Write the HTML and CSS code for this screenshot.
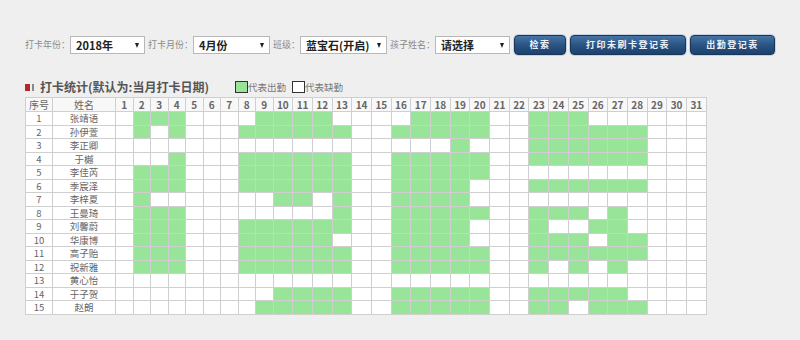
FILE: index.html
```html
<!DOCTYPE html>
<html lang="zh-CN">
  <head>
    <meta charset="UTF-8" />
    <meta name="viewport" content="width=device-width, initial-scale=1.0" />
    <title>打卡统计</title>
    <link rel="stylesheet" href="styles.css">
  </head>
  <body>
    <div class="search-bar">
      <label class="field-label">打卡年份：</label>
      <span class="select-box"><select><option>2018年</option></select></span>
      <label class="field-label">打卡月份：</label>
      <span class="select-box select-month"><select><option>4月份</option></select></span>
      <label class="field-label">班级：</label>
      <span class="select-box select-class"><select><option>蓝宝石(开启)</option></select></span>
      <label class="field-label">孩子姓名：</label>
      <span class="select-box"><select><option>请选择</option></select></span>
      <button class="btn btn-search">检索</button>
      <button class="btn btn-print">打印未刷卡登记表</button>
      <button class="btn btn-record">出勤登记表</button>
    </div>

    <div class="title-row">
      <h3 class="title"><i class="mark-red"></i><i class="mark-gray"></i>打卡统计(默认为:当月打卡日期)</h3>
      <span class="legend"><i class="legend-box on"></i>代表出勤</span>
      <span class="legend"><i class="legend-box"></i>代表缺勤</span>
    </div>

    <table class="attend-table">
      <colgroup id="cols">
        <col class="col-no">
        <col class="col-name">
      </colgroup>
      <thead>
        <tr id="head-row">
          <th class="th-text">序号</th>
          <th class="th-text">姓名</th>
        </tr>
      </thead>
      <tbody id="attend-body"></tbody>
    </table>

    <script src="script.js"></script>
  </body>
</html>
```

FILE: styles.css
```css
* {
  box-sizing: border-box;
}

body {
  margin: 0;
  padding: 35px 0 0 25px;
  background-color: #efefef;
  font-family: "Noto Sans CJK SC", "DejaVu Sans", sans-serif;
  color: #555;
}

/* search bar */
.search-bar {
  display: flex;
  align-items: center;
  height: 19px;
}

.field-label {
  font-size: 9px;
  color: #8a8a8a;
  margin-left: 3px;
}

.field-label:first-child {
  margin-left: 0;
}

.select-box {
  position: relative;
  display: inline-block;
  height: 18px;
}

.select-box select {
  appearance: none;
  -webkit-appearance: none;
  display: block;
  width: 75px;
  height: 18px;
  margin: 0;
  padding: 0 0 0 5px;
  border: 1px solid #b8b8b8;
  border-radius: 0;
  background: #fff;
  color: #222;
  font-family: "Noto Sans CJK SC", sans-serif;
  font-size: 11px;
  font-weight: bold;
  line-height: 16px;
}

.select-month select {
  width: 77px;
}

.select-class select {
  width: 87px;
}

/* dropdown arrow */
.select-box::after {
  content: "";
  position: absolute;
  right: 6px;
  top: 7px;
  border-top: 5px solid #222;
  border-left: 2.5px solid transparent;
  border-right: 2.5px solid transparent;
  pointer-events: none;
}

.btn {
  height: 20px;
  margin-left: 4px;
  padding: 0;
  border: 1px solid #173659;
  border-radius: 4px;
  background: linear-gradient(#4675a5, #2a5483 50%, #1c416c);
  box-shadow: 0 0 0 1px #c9d3df;
  color: #eef3f8;
  font-family: "Noto Sans CJK SC", sans-serif;
  font-size: 9px;
  font-weight: bold;
  letter-spacing: 1.5px;
  line-height: 18px;
  cursor: pointer;
}

.btn-search {
  width: 52px;
}

.btn-print {
  width: 116px;
}

.btn-record {
  width: 85px;
}

/* title */
.title-row {
  display: flex;
  align-items: center;
  height: 14px;
  margin-top: 26px;
}

.title {
  display: flex;
  align-items: center;
  margin: 0;
  font-size: 12px;
  line-height: 14px;
  color: #555;
  font-weight: bold;
}

.mark-red {
  display: inline-block;
  width: 5px;
  height: 7px;
  background: #b3272d;
  margin-right: 2px;
}

.mark-gray {
  display: inline-block;
  width: 2px;
  height: 7px;
  background: #888;
  margin-right: 6px;
}

.legend {
  display: flex;
  align-items: center;
  font-size: 9.5px;
  color: #777;
}

.legend:first-of-type {
  margin-left: 26px;
}

.legend + .legend {
  margin-left: 6px;
}

.legend-box {
  display: inline-block;
  width: 13px;
  height: 12px;
  border: 1px solid #333;
  background: #fff;
}

.legend-box.on {
  background: #98e498;
}

/* table */
.attend-table {
  margin-top: 3px;
  width: 681px;
  table-layout: fixed;
  border-collapse: collapse;
  background: #fff;
  font-size: 9.5px;
  line-height: 12px;
}

.col-no {
  width: 27px;
}

.col-name {
  width: 63px;
}

.col-day {
  width: 17.5px;
}

.col-day2 {
  width: 19.7px;
}

.attend-table th,
.attend-table td {
  padding: 0;
  border: 1px solid #cfcfcf;
  text-align: center;
  color: #666;
}

.attend-table th {
  height: 14px;
  background: #f8f8f8;
  font-weight: bold;
  font-size: 10px;
}

.attend-table th.th-text {
  font-weight: normal;
}

.attend-table tbody tr {
  height: 13.5px;
}

.attend-table td.on {
  background: #98e498;
}
```

FILE: script.js
```js
const names = ["张靖语", "孙伊萱", "李正卿", "于樾", "李佳芮", "季宸泽", "李梓夏",
  "王曼琦", "刘馨蔚", "华康博", "高子贻", "祝新雅", "黄心怡", "于子贺", "赵朗"];

// days with check-in, per child
const present = [
  [2, 3, 4, 9, 10, 11, 12, 17, 18, 19, 20, 23, 24, 25],
  [2, 4, 8, 9, 10, 11, 12, 13, 16, 17, 18, 19, 20, 23, 24, 25, 26, 27, 28],
  [19, 23, 24, 25, 26, 27, 28],
  [4, 8, 9, 10, 11, 12, 13, 16, 17, 18, 19, 20, 23, 24, 25, 26, 27, 28],
  [2, 3, 4, 8, 9, 10, 11, 12, 13, 16, 17, 18, 19, 20],
  [2, 3, 4, 8, 9, 10, 11, 12, 13, 16, 17, 18, 19, 23, 24, 25, 26, 27, 28],
  [2, 10, 11, 13, 16, 17, 18, 19],
  [2, 3, 4, 13, 16, 17, 18, 19, 20, 23, 24, 25, 27],
  [2, 3, 4, 8, 9, 10, 11, 12, 13, 16, 17, 18, 19, 23, 26, 27],
  [2, 3, 4, 8, 9, 10, 11, 12, 16, 17, 18, 19, 23, 24, 25, 27, 28],
  [2, 3, 4, 8, 9, 10, 11, 12, 13, 16, 17, 18, 19, 20, 23, 24, 25, 26, 27, 28],
  [2, 3, 4, 8, 9, 10, 11, 12, 13, 16, 17, 18, 19, 20, 23, 25, 27],
  [],
  [10, 11, 12, 13, 16, 17, 18, 19, 20, 23, 24, 25, 26, 27],
  [9, 10, 11, 12, 13, 16, 17, 18, 19, 20, 23, 24, 26, 27, 28]
];

const cols = document.getElementById("cols");
const headRow = document.getElementById("head-row");
const body = document.getElementById("attend-body");

for (let d = 1; d <= 31; d++) {
  const col = document.createElement("col");
  col.className = d < 10 ? "col-day" : "col-day2";
  cols.appendChild(col);
  const th = document.createElement("th");
  th.textContent = d;
  headRow.appendChild(th);
}

names.forEach(function (name, i) {
  const tr = document.createElement("tr");
  let html = "<td>" + (i + 1) + "</td><td>" + name + "</td>";
  for (let d = 1; d <= 31; d++) {
    html += present[i].indexOf(d) > -1 ? '<td class="on"></td>' : "<td></td>";
  }
  tr.innerHTML = html;
  body.appendChild(tr);
});
```
